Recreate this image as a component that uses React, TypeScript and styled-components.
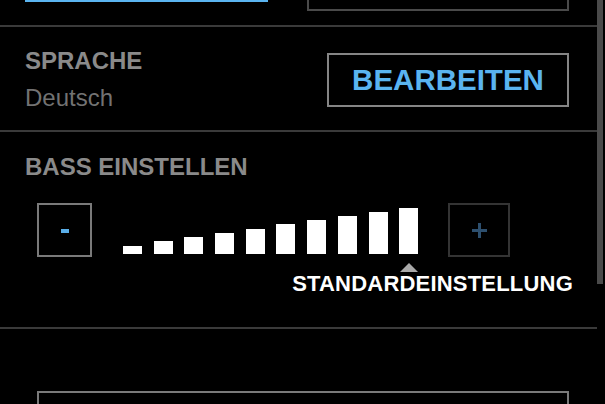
import styled, { createGlobalStyle } from 'styled-components'

const GlobalStyle = createGlobalStyle`
  html, body {
    margin: 0;
    padding: 0;
    background: #000000;
  }
  body {
    width: 605px;
    height: 404px;
    overflow: hidden;
    font-family: 'Liberation Sans', Arial, sans-serif;
  }
`

const BASS_LEVELS = [8, 13, 17, 21, 25, 30, 34, 38, 42, 46]
const DEFAULT_LEVEL = 9

const App = () => {
  return (
    <Screen>
      <GlobalStyle />
      <List>

        {/* previous row, scrolled mostly out of view */}
        <Section $pad="0 28px 14px 25px">
          <ButtonRow>
            <FilledButton />
            <GhostButton />
          </ButtonRow>
        </Section>

        {/* Sprache */}
        <Section $pad="22px 28px 20px 25px">
          <SettingRow>
            <TextBlock>
              <Heading>SPRACHE</Heading>
              <Value>Deutsch</Value>
            </TextBlock>
            <EditButton>BEARBEITEN</EditButton>
          </SettingRow>
        </Section>

        {/* Bass */}
        <Section $pad="23px 24px 32px 25px">
          <Heading>BASS EINSTELLEN</Heading>
          <ControlRow>
            <StepButton $width={55} $border="#7a7a7a">
              <MinusMark />
            </StepButton>
            <BarGroup>
              {BASS_LEVELS.map((h, i) => (
                <BarColumn key={i}>
                  <BarSlot>
                    <Bar style={{ height: h }} />
                  </BarSlot>
                  <MarkerSlot>{i === DEFAULT_LEVEL && <Marker />}</MarkerSlot>
                </BarColumn>
              ))}
            </BarGroup>
            <StepButton $width={62} $border="#343434">
              <PlusMark />
            </StepButton>
          </ControlRow>
          <LabelRow>
            <DefaultLabel>STANDARDEINSTELLUNG</DefaultLabel>
          </LabelRow>
        </Section>

        {/* next row */}
        <Section $pad="62px 28px 0 37px" $last>
          <WideBox />
        </Section>

      </List>
      <ScrollTrack>
        <ScrollThumb />
      </ScrollTrack>
    </Screen>
  )
}

const Screen = styled.div`
  display: flex;
  width: 605px;
  height: 404px;
  overflow: hidden;
  background: #000000;
`

const List = styled.div`
  width: 597px;
  display: flex;
  flex-direction: column;
  margin-top: -43px;
`

const Section = styled.div<{ $pad: string; $last?: boolean }>`
  padding: ${p => p.$pad};
  border-bottom: ${p => (p.$last ? 'none' : '2px solid #3a3a3a')};
  display: flex;
  flex-direction: column;
`

const ButtonRow = styled.div`
  display: flex;
  align-items: center;
  gap: 39px;
`

const FilledButton = styled.div`
  width: 243px;
  height: 36px;
  background: #5ab4f0;
`

const GhostButton = styled.div`
  box-sizing: border-box;
  width: 262px;
  height: 54px;
  border: 2px solid #4a4a4a;
`

const SettingRow = styled.div`
  display: flex;
  align-items: center;
  justify-content: space-between;
`

const TextBlock = styled.div`
  display: flex;
  flex-direction: column;
  gap: 13px;
`

const Heading = styled.div`
  font-size: 24px;
  line-height: 24px;
  font-weight: 700;
  color: #8a8a8a;
  white-space: nowrap;
`

const Value = styled.div`
  font-size: 24px;
  line-height: 24px;
  color: #727272;
`

const EditButton = styled.div`
  box-sizing: border-box;
  width: 242px;
  height: 54px;
  border: 2px solid #858585;
  display: flex;
  align-items: center;
  justify-content: center;
  font-size: 29.5px;
  font-weight: 700;
  color: #5ab4f0;
`

const ControlRow = styled.div`
  display: flex;
  align-items: flex-start;
  margin-top: 24px;
  padding-left: 12px;
`

const StepButton = styled.div<{ $width: number; $border: string }>`
  box-sizing: border-box;
  width: ${p => p.$width}px;
  height: 54px;
  border: 2px solid ${p => p.$border};
  display: flex;
  align-items: center;
  justify-content: center;
`

const MinusMark = styled.div`
  width: 8px;
  height: 4px;
  background: #5aaee8;
  margin-top: 2px;
`

const PlusMark = styled.div`
  position: relative;
  width: 15px;
  height: 15px;
  &::before, &::after {
    content: '';
    position: absolute;
    background: #2d4f6e;
  }
  &::before {
    left: 0;
    right: 0;
    top: 6px;
    height: 3px;
  }
  &::after {
    top: 0;
    bottom: 0;
    left: 6px;
    width: 3px;
  }
`

const BarGroup = styled.div`
  display: flex;
  gap: 11.7px;
  margin: 5px 30px 0 31px;
`

const BarColumn = styled.div`
  display: flex;
  flex-direction: column;
  width: 19px;
`

const BarSlot = styled.div`
  height: 46px;
  display: flex;
  align-items: flex-end;
`

const Bar = styled.div`
  width: 100%;
  background: #ffffff;
`

const MarkerSlot = styled.div`
  height: 18px;
  display: flex;
  align-items: flex-end;
  justify-content: center;
`

const Marker = styled.div`
  width: 0;
  height: 0;
  border-left: 9px solid transparent;
  border-right: 9px solid transparent;
  border-bottom: 9px solid #a9a9a9;
`

const LabelRow = styled.div`
  display: flex;
  justify-content: flex-end;
  margin-top: 1px;
`

const DefaultLabel = styled.div`
  font-size: 22px;
  line-height: 22px;
  font-weight: 700;
  letter-spacing: 0.2px;
  color: #ffffff;
  white-space: nowrap;
`

const WideBox = styled.div`
  box-sizing: border-box;
  height: 60px;
  border: 2px solid #7a7a7a;
`

const ScrollTrack = styled.div`
  width: 6px;
  margin-right: 2px;
  display: flex;
  flex-direction: column;
`

const ScrollThumb = styled.div`
  height: 284px;
  background: #4a4a4a;
`

export default App
